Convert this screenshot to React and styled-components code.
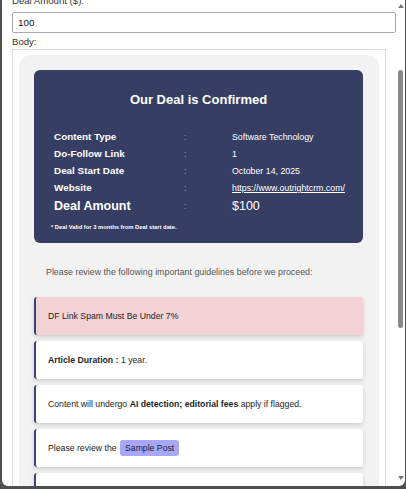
import React from 'react'
import styled, { createGlobalStyle } from 'styled-components'

const Global = createGlobalStyle`
    html, body {
        margin : 0;
        padding : 0;
        background : #4f4f4f;
        font-family : "Liberation Sans", Arial, sans-serif;
    }
`

const Frame = styled.div`
    width : 406px;
    height : 489px;
    box-sizing : border-box;
    padding : 0 1px 3px 2px;
    display : flex;
`

const Win = styled.div`
    flex : 1;
    display : flex;
    background : #fff;
    border-radius : 0 0 6px 6px;
    overflow : hidden;
`

const Content = styled.div`
    flex : 1;
    min-width : 0;
    padding-left : 10px;
    overflow : hidden;
`

const Label = styled.div`
    font-size : 9.6px;
    line-height : 12px;
    color : #333;
    margin-top : ${p => p.$top || 0}px;
`

const Input = styled.div`
    height : 21px;
    box-sizing : border-box;
    border : 1px solid #a9a9a9;
    border-radius : 2px;
    padding-left : 5px;
    font-size : 9.8px;
    line-height : 19px;
    color : #111;
    margin-top : 5px;
`

const BodyBox = styled.div`
    margin-top : 1px;
    margin-right : 10px;
    border : 1px solid #dcdcdc;
    padding : 5px 6px 0 6px;
    height : 600px;
`

const Shell = styled.div`
    background : #f2f2f2;
    border-radius : 12px;
    padding : 15px 16px 15px 15px;
    height : 100%;
`

const Card = styled.div`
    background : #363e64;
    border-radius : 6px;
    padding : 22px 17px 12px 17px;
    color : #fff;
`

const Title = styled.div`
    text-align : center;
    font-size : 13px;
    font-weight : bold;
    line-height : 16px;
    margin-bottom : 22px;
`

const Grid = styled.div`
    display : grid;
    grid-template-columns : 130px 48px 1fr;
    padding-left : 3px;
    row-gap : 3px;
    align-items : center;
`

const Key = styled.div`
    font-size : ${p => p.$big ? 12.5 : 9.9}px;
    font-weight : bold;
    line-height : ${p => p.$big ? 16 : 14}px;
`

const Colon = styled.div`
    font-size : 9px;
    color : #9aa0b8;
`

const Val = styled.div`
    font-size : ${p => p.$big ? 12.5 : 8.8}px;
    line-height : ${p => p.$big ? 16 : 14}px;
    a {
        color : #fff;
        text-decoration : underline;
    }
`

const Note = styled.div`
    font-size : 5.8px;
    font-weight : bold;
    margin-top : 9px;
    line-height : 8px;
`

const Intro = styled.div`
    font-size : 8.85px;
    color : #555;
    padding-left : 12px;
    margin : 23px 0 19px;
    line-height : 12px;
`

const List = styled.div`
    display : flex;
    flex-direction : column;
    gap : 6px;
`

const Item = styled.div`
    height : 38px;
    box-sizing : border-box;
    display : flex;
    align-items : center;
    padding : 0 12px;
    border-left : 2px solid #3b4478;
    border-radius : 3px;
    background : ${p => p.$warn ? '#f2d2d4' : '#fff'};
    box-shadow : 0 2px 4px rgba(0,0,0,0.16);
    font-size : 8.7px;
    color : #1e1e1e;
    white-space : pre;
    b { font-weight : bold; }
`

const Badge = styled.span`
    background : #a7a7f6;
    border-radius : 3px;
    padding : 3px 5px;
    margin-left : 1px;
    color : #1c1c3a;
`

const Scroll = styled.div`
    width : 9px;
    display : flex;
    flex-direction : column;
    align-items : center;
    padding : 4px 0 6px;
`

const Arrow = styled.div`
    width : 0;
    height : 0;
    border-left : 3px solid transparent;
    border-right : 3px solid transparent;
    ${p => p.$down ? 'border-top : 4px solid #777;' : 'border-bottom : 4px solid #777;'}
`

const Track = styled.div`
    flex : 1;
    padding-top : 62px;
    padding-bottom : 148px;
    display : flex;
`

const Thumb = styled.div`
    width : 5px;
    background : #8a8a8a;
    border-radius : 3px;
`

const rows = [
    ['Content Type', 'Software Technology'],
    ['Do-Follow Link', '1'],
    ['Deal Start Date', 'October 14, 2025'],
]

function App() {
    return (
        <Frame>
            <Global />
            <Win>
                <Content>
                    <Label $top={-5}>Deal Amount ($):</Label>
                    <Input>100</Input>
                    <Label $top={3}>Body:</Label>
                    <BodyBox>
                        <Shell>
                            <Card>
                                <Title>Our Deal is Confirmed</Title>
                                <Grid>
                                    {rows.map(r => (
                                        <React.Fragment key={r[0]}>
                                            <Key>{r[0]}</Key>
                                            <Colon>:</Colon>
                                            <Val>{r[1]}</Val>
                                        </React.Fragment>
                                    ))}
                                    <Key>Website</Key>
                                    <Colon>:</Colon>
                                    <Val><a href="#">https://www.outrightcrm.com/</a></Val>
                                    <Key $big>Deal Amount</Key>
                                    <Colon>:</Colon>
                                    <Val $big>$100</Val>
                                </Grid>
                                <Note>* Deal Valid for 3 months from Deal start date.</Note>
                            </Card>
                            <Intro>Please review the following important guidelines before we proceed:</Intro>
                            <List>
                                <Item $warn>DF Link Spam Must Be Under 7%</Item>
                                <Item><b>Article Duration : </b>1 year.</Item>
                                <Item>Content will undergo <b>AI detection; editorial fees</b> apply if flagged.</Item>
                                <Item>Please review the <Badge>Sample Post</Badge></Item>
                                <Item />
                            </List>
                        </Shell>
                    </BodyBox>
                </Content>
                <Scroll>
                    <Arrow />
                    <Track><Thumb /></Track>
                    <Arrow $down />
                </Scroll>
            </Win>
        </Frame>
    )
}

export default App
